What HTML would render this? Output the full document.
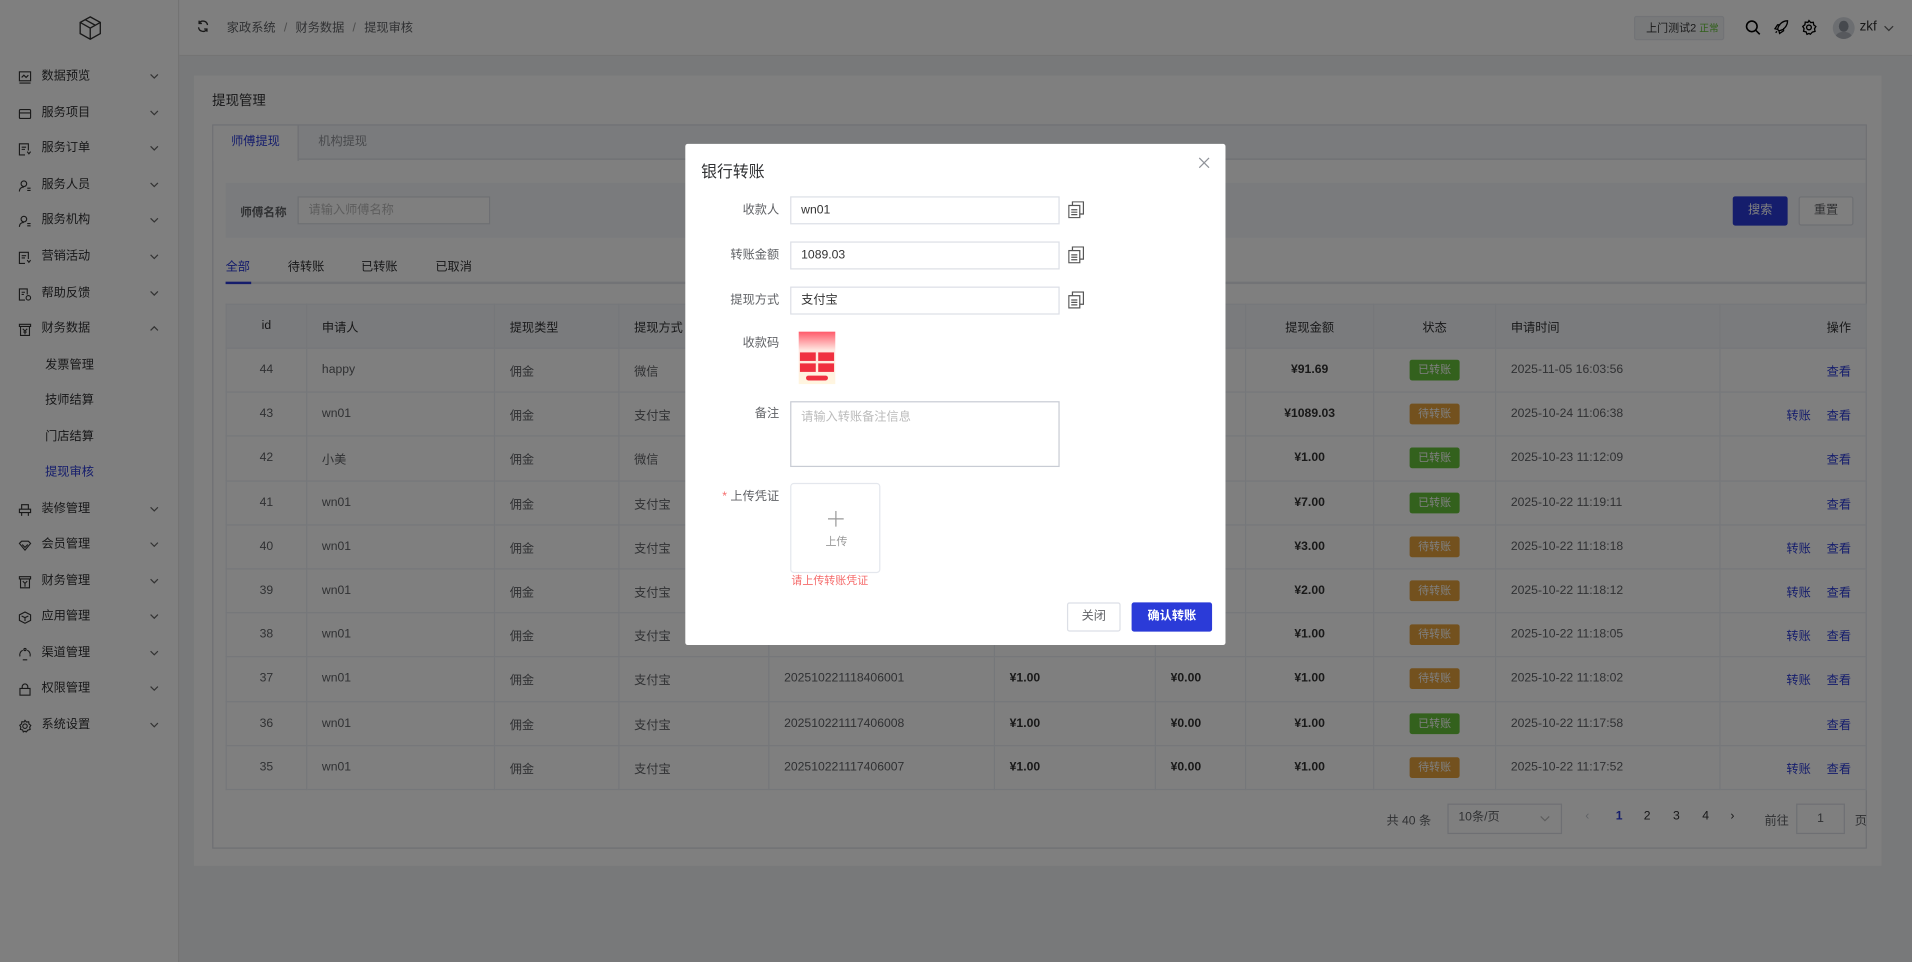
<!DOCTYPE html>
<html><head><meta charset="utf-8">
<style>
*{box-sizing:border-box;margin:0;padding:0}
html,body{width:1912px;height:962px;overflow:hidden;background:#fff}
body{font-family:"Liberation Sans","Noto Sans CJK SC",sans-serif;color:#333;font-size:10px}
#root{position:absolute;left:0;top:0;width:1568px;height:789px;transform:scale(1.21939);transform-origin:0 0;background:#f0f2f5;overflow:hidden}
.a{position:absolute;white-space:nowrap}
.side{position:absolute;left:0;top:0;width:147px;height:789px;background:#fff;border-right:1px solid #e6e6e6}
.mi{position:absolute;left:0;width:147px;height:20px;line-height:20px;font-size:10px;color:#303133}
.mi .t{position:absolute;left:34px}
.mi svg.ic{position:absolute;left:15px;top:5px}
.mi .ch{position:absolute;left:123px;top:7px}
.sub{position:absolute;left:37px;font-size:10px;color:#303133;line-height:20px}
.hdr{position:absolute;left:147px;top:0;width:1421px;height:46px;background:#fff;border-bottom:1px solid #e8e8e8}
.card{position:absolute;left:159px;top:62px;width:1384px;height:648px;background:#fff}
table{border-collapse:collapse;position:absolute;left:185px;top:249px;width:1345px;font-size:10px;table-layout:fixed}
td,th{border:1px solid #ebeef5;height:36.2px;font-weight:normal;color:#606266;padding:0 12px;text-align:left;white-space:nowrap}
th{background:#f5f7fa;color:#303133;height:36px}
.c{text-align:center}.r{text-align:right}
td.m{font-weight:bold;color:#333}
.tag{display:inline-block;width:41px;height:17px;line-height:17px;border-radius:2px;color:#fff;font-size:9px;text-align:center}
.g{background:#67c23a}.o{background:#e6a23c}
.lk{color:#2b3bd8;margin-left:13px}
.ov{position:absolute;left:0;top:0;width:1568px;height:789px;background:rgba(0,0,0,.5)}
.dlg{position:absolute;left:562px;top:118px;width:443px;height:411px;background:#fff;border-radius:2px}
.lb{position:absolute;right:366px;font-size:10px;color:#606266;line-height:23px}
.inp{position:absolute;left:86px;width:221px;height:23px;border:1px solid #dcdfe6;font-size:10px;line-height:21px;padding-left:8px;color:#333}
.cp{position:absolute;left:314px}
.btn{position:absolute;height:24px;line-height:22px;text-align:center;font-size:10px;border:1px solid #dcdfe6;border-radius:2px}
</style></head><body><div id="root">

<div class="side">
  <svg class="a" style="left:63px;top:12px" width="22" height="22" viewBox="0 0 24 24" fill="none" stroke="#333" stroke-width="1.2"><path d="M12 2 21 7v10l-9 5-9-5V7z M3 7l9 5 9-5 M12 12v10 M7.5 4.5l9 5"/></svg>
  <div class="mi" style="top:53px"><svg class="ic" width="11" height="11" viewBox="0 0 12 12" fill="none" stroke="#333" stroke-width="1"><rect x="1" y="1" width="10" height="8"/><path d="M3 6l2-2 2 2 2-2M1 11h10"/></svg><span class="t">数据预览</span><svg class="ch" width="7" height="5" viewBox="0 0 7 5"><path d="M.5 1l3 3 3-3" fill="none" stroke="#666"/></svg></div>
  <div class="mi" style="top:83px"><svg class="ic" width="11" height="11" viewBox="0 0 12 12" fill="none" stroke="#333"><rect x="1" y="2" width="10" height="8" rx="1"/><path d="M1 5h10"/></svg><span class="t">服务项目</span><svg class="ch" width="7" height="5" viewBox="0 0 7 5"><path d="M.5 1l3 3 3-3" fill="none" stroke="#666"/></svg></div>
  <div class="mi" style="top:112px"><svg class="ic" width="11" height="11" viewBox="0 0 12 12" fill="none" stroke="#333"><path d="M9 7V1H1v10h5M3 4h4M3 6h3"/><path d="M8 8l1.5 2L11 8"/></svg><span class="t">服务订单</span><svg class="ch" width="7" height="5" viewBox="0 0 7 5"><path d="M.5 1l3 3 3-3" fill="none" stroke="#666"/></svg></div>
  <div class="mi" style="top:142px"><svg class="ic" width="11" height="11" viewBox="0 0 12 12" fill="none" stroke="#333"><circle cx="5" cy="4" r="2.5"/><path d="M1 11c0-3 2-4 4-4M8 8h3M8 10h3"/></svg><span class="t">服务人员</span><svg class="ch" width="7" height="5" viewBox="0 0 7 5"><path d="M.5 1l3 3 3-3" fill="none" stroke="#666"/></svg></div>
  <div class="mi" style="top:171px"><svg class="ic" width="11" height="11" viewBox="0 0 12 12" fill="none" stroke="#333"><circle cx="5" cy="4" r="2.5"/><path d="M1 11c0-3 2-4 4-4M8 8h3M8 10h3"/></svg><span class="t">服务机构</span><svg class="ch" width="7" height="5" viewBox="0 0 7 5"><path d="M.5 1l3 3 3-3" fill="none" stroke="#666"/></svg></div>
  <div class="mi" style="top:201px"><svg class="ic" width="11" height="11" viewBox="0 0 12 12" fill="none" stroke="#333"><path d="M9 7V1H1v10h5M3 4h4M3 6h3"/><path d="M8 8l1.5 2L11 8"/></svg><span class="t">营销活动</span><svg class="ch" width="7" height="5" viewBox="0 0 7 5"><path d="M.5 1l3 3 3-3" fill="none" stroke="#666"/></svg></div>
  <div class="mi" style="top:231px"><svg class="ic" width="11" height="11" viewBox="0 0 12 12" fill="none" stroke="#333"><path d="M8 6V1H1v10h5M3 4h3M3 6h2"/><circle cx="9" cy="9" r="2"/></svg><span class="t">帮助反馈</span><svg class="ch" width="7" height="5" viewBox="0 0 7 5"><path d="M.5 1l3 3 3-3" fill="none" stroke="#666"/></svg></div>
  <div class="mi" style="top:260px"><svg class="ic" width="11" height="11" viewBox="0 0 12 12" fill="none" stroke="#333"><path d="M1 1h10v2H1zM2 3v8h8V3M4 5l2 2 2-2M6 7v3M4.5 8h3"/></svg><span class="t">财务数据</span><svg class="ch" width="7" height="5" viewBox="0 0 7 5"><path d="M.5 4l3-3 3 3" fill="none" stroke="#666"/></svg></div>
  <div class="sub" style="top:290px">发票管理</div>
  <div class="sub" style="top:319px">技师结算</div>
  <div class="sub" style="top:349px">门店结算</div>
  <div class="sub" style="top:378px;color:#2b3bd8">提现审核</div>
  <div class="mi" style="top:408px"><svg class="ic" width="11" height="11" viewBox="0 0 12 12" fill="none" stroke="#333"><path d="M3 1h6v4H3zM1 5h10v3H1zM3 8v3M9 8v3"/></svg><span class="t">装修管理</span><svg class="ch" width="7" height="5" viewBox="0 0 7 5"><path d="M.5 1l3 3 3-3" fill="none" stroke="#666"/></svg></div>
  <div class="mi" style="top:437px"><svg class="ic" width="11" height="11" viewBox="0 0 12 12" fill="none" stroke="#333"><path d="M1 4l2-2h6l2 2-5 6z M3.5 5l2.5 2.5L8.5 5"/></svg><span class="t">会员管理</span><svg class="ch" width="7" height="5" viewBox="0 0 7 5"><path d="M.5 1l3 3 3-3" fill="none" stroke="#666"/></svg></div>
  <div class="mi" style="top:467px"><svg class="ic" width="11" height="11" viewBox="0 0 12 12" fill="none" stroke="#333"><path d="M1 1h10v2H1zM2 3v8h8V3M4 5l2 2 2-2M6 7v3"/></svg><span class="t">财务管理</span><svg class="ch" width="7" height="5" viewBox="0 0 7 5"><path d="M.5 1l3 3 3-3" fill="none" stroke="#666"/></svg></div>
  <div class="mi" style="top:496px"><svg class="ic" width="11" height="11" viewBox="0 0 12 12" fill="none" stroke="#333"><path d="M6 1l5 2.5v5L6 11 1 8.5v-5z M3 4.5l3 1.5 3-1.5M6 6v3"/></svg><span class="t">应用管理</span><svg class="ch" width="7" height="5" viewBox="0 0 7 5"><path d="M.5 1l3 3 3-3" fill="none" stroke="#666"/></svg></div>
  <div class="mi" style="top:526px"><svg class="ic" width="11" height="11" viewBox="0 0 12 12" fill="none" stroke="#333"><path d="M4 2.5A4.5 4.5 0 0 0 1.5 8M8 2.5A4.5 4.5 0 0 1 10.5 8M4 11h4"/><circle cx="6" cy="1.8" r="1"/></svg><span class="t">渠道管理</span><svg class="ch" width="7" height="5" viewBox="0 0 7 5"><path d="M.5 1l3 3 3-3" fill="none" stroke="#666"/></svg></div>
  <div class="mi" style="top:555px"><svg class="ic" width="11" height="11" viewBox="0 0 12 12" fill="none" stroke="#333"><rect x="1.5" y="5" width="9" height="6"/><path d="M3.5 5V3.5a2.5 2.5 0 0 1 5 0V5"/></svg><span class="t">权限管理</span><svg class="ch" width="7" height="5" viewBox="0 0 7 5"><path d="M.5 1l3 3 3-3" fill="none" stroke="#666"/></svg></div>
  <div class="mi" style="top:585px"><svg class="ic" width="11" height="11" viewBox="0 0 12 12" fill="none" stroke="#333"><circle cx="6" cy="6" r="2"/><path d="M6 .8l1.3 1.5 2-.2.3 2 1.6 1.2-1 1.7.4 2-2 .5L7 11.2 6 10.5l-1.5.7-.6-1.8-2-.5.4-2-1-1.7 1.6-1.2.3-2 2 .2z"/></svg><span class="t">系统设置</span><svg class="ch" width="7" height="5" viewBox="0 0 7 5"><path d="M.5 1l3 3 3-3" fill="none" stroke="#666"/></svg></div>
</div>

<div class="hdr">
  <svg class="a" style="left:14px;top:16px" width="11" height="11" viewBox="0 0 12 12" fill="none" stroke="#333" stroke-width="1.2"><path d="M10 5A4 4 0 0 0 2.5 3.5M2 7a4 4 0 0 0 7.5 1.5M2.5 1v2.5H5M9.5 11V8.5H7"/></svg>
  <div class="a" style="left:39px;top:14px;font-size:10px;color:#606266">家政系统 <span style="color:#999;margin:0 4px">/</span> 财务数据 <span style="color:#999;margin:0 4px">/</span> 提现审核</div>
  <div class="a" style="left:1193px;top:13px;width:74px;height:20px;background:#f0f2f5;border:1px solid #e4e7ed;border-radius:2px;font-size:9px;line-height:18px;padding-left:9px;color:#333">上门测试2 <span style="color:#67c23a;font-size:8px">正常</span></div>
  <svg class="a" style="left:1284px;top:16px" width="13" height="13" viewBox="0 0 12 12" fill="none" stroke="#000" stroke-width="1.2"><circle cx="5.2" cy="5.2" r="4"/><path d="M8.2 8.2l3 3"/></svg>
  <svg class="a" style="left:1307px;top:16px" width="13" height="13" viewBox="0 0 12 12" fill="none" stroke="#000"><path d="M11 1C7 1 4 4 3.5 7.5L4.5 8.5C8 8 11 5 11 1zM3.5 7.5 1.5 7l2-3h2M4.5 8.5 5 10.5l3-2v-2M2 10l1-1"/></svg>
  <svg class="a" style="left:1330px;top:16px" width="13" height="13" viewBox="0 0 12 12" fill="none" stroke="#000"><circle cx="6" cy="6" r="1.8"/><path d="M6 .8l1.3 1.5 2-.2.3 2 1.6 1.2-1 1.7.4 2-2 .5L7 11.2 6 10.5l-1.5.7-.6-1.8-2-.5.4-2-1-1.7 1.6-1.2.3-2 2 .2z"/></svg>
  <div class="a" style="left:1356px;top:14px;width:18px;height:18px;border-radius:50%;background:#d8dce3;overflow:hidden"><div style="position:absolute;left:5px;top:3px;width:8px;height:9px;border-radius:50%;background:#8d939c"></div><div style="position:absolute;left:2px;top:12px;width:14px;height:10px;border-radius:50%;background:#aeb3ba"></div></div>
  <div class="a" style="left:1378px;top:16px;font-size:11px;color:#333">zkf</div>
  <svg class="a" style="left:1398px;top:21px" width="8" height="5" viewBox="0 0 8 5"><path d="M.5 .5l3.5 3.5 3.5-3.5" fill="none" stroke="#666"/></svg>
</div>

<div class="card"></div>
<div class="a" style="left:174px;top:74px;font-size:11px;color:#303133">提现管理</div>
<div class="a" style="left:174px;top:102px;width:1357px;height:594px;border:1px solid #dcdfe6"></div>
<div class="a" style="left:175px;top:103px;width:1355px;height:28px;background:#f5f7fa;border-bottom:1px solid #dcdfe6"></div>
<div class="a" style="left:175px;top:103px;width:70px;height:29px;background:#fff;border-right:1px solid #dcdfe6;color:#2b3bd8;line-height:28px;text-align:center">师傅提现</div>
<div class="a" style="left:261px;top:103px;line-height:28px;color:#909399">机构提现</div>
<div class="a" style="left:185px;top:150px;width:1345px;height:45px;background:#f5f7fa"></div>
<div class="a" style="left:197px;top:166px;color:#606266;font-weight:bold;font-size:9.5px">师傅名称</div>
<div class="a" style="left:244px;top:161px;width:158px;height:23px;border:1px solid #dcdfe6;background:#fff;color:#bbb;line-height:21px;padding-left:8px">请输入师傅名称</div>
<div class="a" style="left:1421px;top:161px;width:45px;height:24px;background:#2b3bd8;color:#fff;line-height:24px;text-align:center;border-radius:2px">搜索</div>
<div class="a" style="left:1475px;top:161px;width:45px;height:24px;background:#fff;border:1px solid #dcdfe6;color:#606266;line-height:22px;text-align:center;border-radius:2px">重置</div>
<div class="a" style="left:185px;top:210px;color:#2b3bd8">全部</div>
<div class="a" style="left:236px;top:210px;color:#303133">待转账</div>
<div class="a" style="left:296px;top:210px;color:#303133">已转账</div>
<div class="a" style="left:357px;top:210px;color:#303133">已取消</div>
<div class="a" style="left:185px;top:231px;width:1345px;height:2px;background:#e4e7ed"></div>
<div class="a" style="left:185px;top:231px;width:21px;height:2px;background:#2b3bd8"></div>

<table>
<colgroup><col style="width:66px"><col style="width:154px"><col style="width:102px"><col style="width:123px"><col style="width:185px"><col style="width:132px"><col style="width:74px"><col style="width:105px"><col style="width:100px"><col style="width:184px"><col style="width:120px"></colgroup>
<tr><th class="c">id</th><th>申请人</th><th>提现类型</th><th>提现方式</th><th>提现单号</th><th>手续费</th><th>到账金额</th><th class="c">提现金额</th><th class="c">状态</th><th>申请时间</th><th class="r">操作</th></tr>
<tr><td class="c">44</td><td>happy</td><td>佣金</td><td>微信</td><td>202511051603566001</td><td class="m">¥1.00</td><td class="m">¥0.00</td><td class="c m">¥91.69</td><td class="c"><span class="tag g">已转账</span></td><td>2025-11-05 16:03:56</td><td class="r"><span class="lk">查看</span></td></tr>
<tr><td class="c">43</td><td>wn01</td><td>佣金</td><td>支付宝</td><td>202510241106386001</td><td class="m">¥1.00</td><td class="m">¥0.00</td><td class="c m">¥1089.03</td><td class="c"><span class="tag o">待转账</span></td><td>2025-10-24 11:06:38</td><td class="r"><span class="lk">转账</span><span class="lk">查看</span></td></tr>
<tr><td class="c">42</td><td>小美</td><td>佣金</td><td>微信</td><td>202510231112096001</td><td class="m">¥1.00</td><td class="m">¥0.00</td><td class="c m">¥1.00</td><td class="c"><span class="tag g">已转账</span></td><td>2025-10-23 11:12:09</td><td class="r"><span class="lk">查看</span></td></tr>
<tr><td class="c">41</td><td>wn01</td><td>佣金</td><td>支付宝</td><td>202510221119116001</td><td class="m">¥1.00</td><td class="m">¥0.00</td><td class="c m">¥7.00</td><td class="c"><span class="tag g">已转账</span></td><td>2025-10-22 11:19:11</td><td class="r"><span class="lk">查看</span></td></tr>
<tr><td class="c">40</td><td>wn01</td><td>佣金</td><td>支付宝</td><td>202510221118186001</td><td class="m">¥1.00</td><td class="m">¥0.00</td><td class="c m">¥3.00</td><td class="c"><span class="tag o">待转账</span></td><td>2025-10-22 11:18:18</td><td class="r"><span class="lk">转账</span><span class="lk">查看</span></td></tr>
<tr><td class="c">39</td><td>wn01</td><td>佣金</td><td>支付宝</td><td>202510221118126001</td><td class="m">¥1.00</td><td class="m">¥0.00</td><td class="c m">¥2.00</td><td class="c"><span class="tag o">待转账</span></td><td>2025-10-22 11:18:12</td><td class="r"><span class="lk">转账</span><span class="lk">查看</span></td></tr>
<tr><td class="c">38</td><td>wn01</td><td>佣金</td><td>支付宝</td><td>202510221118056001</td><td class="m">¥1.00</td><td class="m">¥0.00</td><td class="c m">¥1.00</td><td class="c"><span class="tag o">待转账</span></td><td>2025-10-22 11:18:05</td><td class="r"><span class="lk">转账</span><span class="lk">查看</span></td></tr>
<tr><td class="c">37</td><td>wn01</td><td>佣金</td><td>支付宝</td><td>202510221118406001</td><td class="m">¥1.00</td><td class="m">¥0.00</td><td class="c m">¥1.00</td><td class="c"><span class="tag o">待转账</span></td><td>2025-10-22 11:18:02</td><td class="r"><span class="lk">转账</span><span class="lk">查看</span></td></tr>
<tr><td class="c">36</td><td>wn01</td><td>佣金</td><td>支付宝</td><td>202510221117406008</td><td class="m">¥1.00</td><td class="m">¥0.00</td><td class="c m">¥1.00</td><td class="c"><span class="tag g">已转账</span></td><td>2025-10-22 11:17:58</td><td class="r"><span class="lk">查看</span></td></tr>
<tr><td class="c">35</td><td>wn01</td><td>佣金</td><td>支付宝</td><td>202510221117406007</td><td class="m">¥1.00</td><td class="m">¥0.00</td><td class="c m">¥1.00</td><td class="c"><span class="tag o">待转账</span></td><td>2025-10-22 11:17:52</td><td class="r"><span class="lk">转账</span><span class="lk">查看</span></td></tr>
</table>

<div class="a" style="left:1137px;top:664px;color:#606266">共 40 条</div>
<div class="a" style="left:1187px;top:659px;width:94px;height:25px;border:1px solid #dcdfe6;color:#606266;line-height:21px;padding-left:8px">10条/页</div>
<svg class="a" style="left:1263px;top:669px" width="8" height="5" viewBox="0 0 8 5"><path d="M.5 .5l3.5 3.5 3.5-3.5" fill="none" stroke="#bbb"/></svg>
<div class="a" style="left:1300px;top:664px;color:#c0c4cc">‹</div>
<div class="a" style="left:1325px;top:664px;color:#2b3bd8;font-weight:bold">1</div>
<div class="a" style="left:1348px;top:664px;color:#303133">2</div>
<div class="a" style="left:1372px;top:664px;color:#303133">3</div>
<div class="a" style="left:1396px;top:664px;color:#303133">4</div>
<div class="a" style="left:1419px;top:664px;color:#303133">›</div>
<div class="a" style="left:1447px;top:664px;color:#606266">前往</div>
<div class="a" style="left:1473px;top:659px;width:40px;height:25px;border:1px solid #dcdfe6;color:#606266;line-height:23px;text-align:center">1</div>
<div class="a" style="left:1521px;top:664px;color:#606266">页</div>

<div class="ov"></div>

<div class="dlg">
  <div class="a" style="left:13px;top:12px;font-size:13px;color:#303133">银行转账</div>
  <svg class="a" style="left:421px;top:11px" width="9" height="9" viewBox="0 0 9 9"><path d="M.5.5l8 8M8.5.5l-8 8" stroke="#909399" stroke-width="1"/></svg>
  <div class="lb" style="top:43px">收款人</div>
  <div class="inp" style="top:43px">wn01</div>
  <div class="lb" style="top:80px">转账金额</div>
  <div class="inp" style="top:80px">1089.03</div>
  <div class="lb" style="top:117px">提现方式</div>
  <div class="inp" style="top:117px">支付宝</div>
  <svg class="cp" style="top:47px" width="13" height="14" viewBox="0 0 13 14" fill="none" stroke="#555"><rect x=".5" y="3.5" width="9" height="10"/><path d="M3.5 3.5V.5h9v10h-3M2.5 7h5M2.5 9h5M2.5 11h5"/></svg>
  <svg class="cp" style="top:84px" width="13" height="14" viewBox="0 0 13 14" fill="none" stroke="#555"><rect x=".5" y="3.5" width="9" height="10"/><path d="M3.5 3.5V.5h9v10h-3M2.5 7h5M2.5 9h5M2.5 11h5"/></svg>
  <svg class="cp" style="top:121px" width="13" height="14" viewBox="0 0 13 14" fill="none" stroke="#555"><rect x=".5" y="3.5" width="9" height="10"/><path d="M3.5 3.5V.5h9v10h-3M2.5 7h5M2.5 9h5M2.5 11h5"/></svg>
  <div class="lb" style="top:152px">收款码</div>
  <div class="a" style="left:93px;top:154px;width:30px;height:43px;background:linear-gradient(#ff5a6a,#ffe6e0 35%,#fff6e0)">
    <div class="a" style="left:1px;top:17px;width:13px;height:7px;background:#f03040"></div>
    <div class="a" style="left:16px;top:17px;width:13px;height:7px;background:#f03040"></div>
    <div class="a" style="left:1px;top:26px;width:13px;height:7px;background:#f03040"></div>
    <div class="a" style="left:16px;top:26px;width:13px;height:7px;background:#f03040"></div>
    <div class="a" style="left:6px;top:36px;width:18px;height:4px;border-radius:2px;background:#f03040"></div>
  </div>
  <div class="lb" style="top:210px">备注</div>
  <div class="a" style="left:86px;top:211px;width:221px;height:54px;border:1px solid #c8ccd4;color:#bbb;padding:3px 8px">请输入转账备注信息</div>
  <div class="lb" style="top:278px"><span style="color:#f56c6c">*</span> 上传凭证</div>
  <div class="a" style="left:86px;top:278px;width:74px;height:74px;border:1px solid #e4e7ed;border-radius:3px">
    <svg class="a" style="left:30px;top:22px" width="13" height="13" viewBox="0 0 13 13"><path d="M6.5 0v13M0 6.5h13" stroke="#999"/></svg>
    <div class="a" style="left:28px;top:40px;font-size:9px;color:#999">上传</div>
  </div>
  <div class="a" style="left:87px;top:351px;font-size:9px;color:#f56c6c">请上传转账凭证</div>
  <div class="btn" style="left:313px;top:376px;width:44px;color:#606266;background:#fff">关闭</div>
  <div class="btn" style="left:366px;top:376px;width:66px;color:#fff;background:#2b3bd8;border-color:#2b3bd8;font-weight:bold">确认转账</div>
</div>

</div></body></html>
